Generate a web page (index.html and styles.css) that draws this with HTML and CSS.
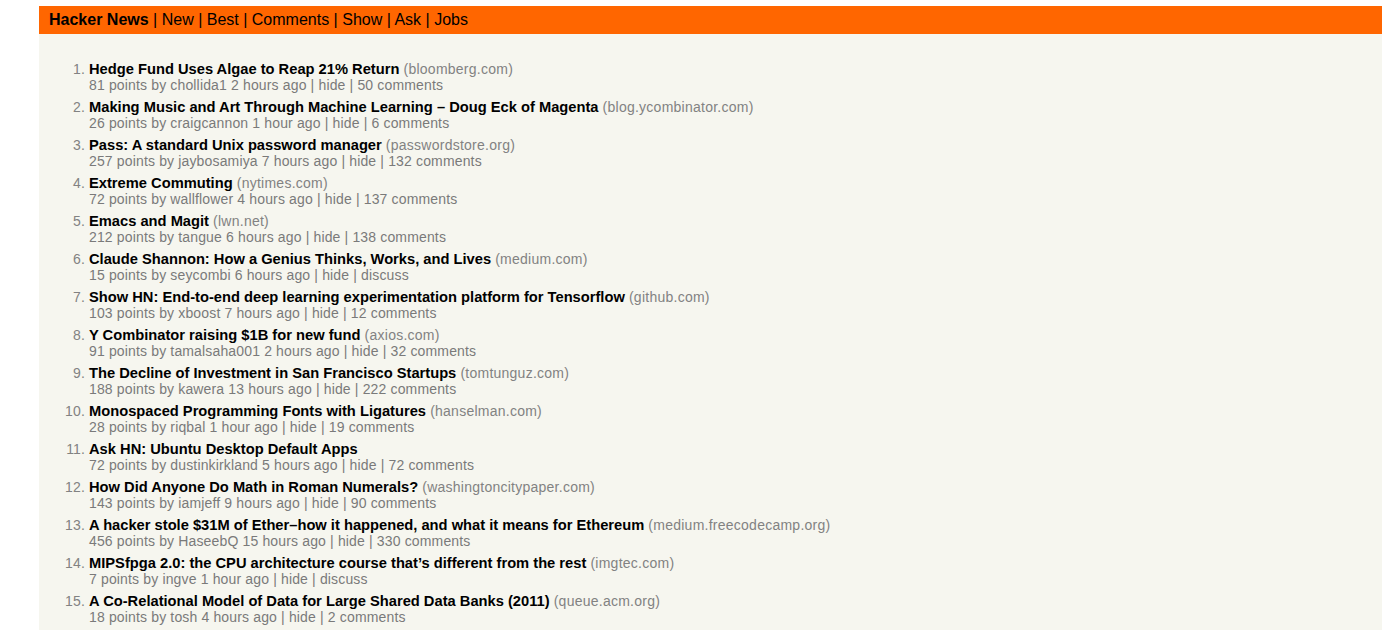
FILE: index.html
```html
<!DOCTYPE html>
<html>
<head>
<meta charset="utf-8">
<title>Hacker News</title>
<link rel="stylesheet" href="styles.css">
</head>
<body>
<div class="page">
  <header class="topbar">
    <b class="brand">Hacker News</b><span class="sep"> | </span><a>New</a><span class="sep"> | </span><a>Best</a><span class="sep"> | </span><a>Comments</a><span class="sep"> | </span><a>Show</a><span class="sep"> | </span><a>Ask</a><span class="sep"> | </span><a>Jobs</a>
  </header>
  <ol class="stories">
    <li class="story"><span class="rank">1.</span><div class="body"><div class="title"><a>Hedge Fund Uses Algae to Reap 21% Return</a> <span class="site">(bloomberg.com)</span></div><div class="sub">81 points by chollida1 2 hours ago | hide | 50 comments</div></div></li>
    <li class="story"><span class="rank">2.</span><div class="body"><div class="title"><a>Making Music and Art Through Machine Learning – Doug Eck of Magenta</a> <span class="site">(blog.ycombinator.com)</span></div><div class="sub">26 points by craigcannon 1 hour ago | hide | 6 comments</div></div></li>
    <li class="story"><span class="rank">3.</span><div class="body"><div class="title"><a>Pass: A standard Unix password manager</a> <span class="site">(passwordstore.org)</span></div><div class="sub">257 points by jaybosamiya 7 hours ago | hide | 132 comments</div></div></li>
    <li class="story"><span class="rank">4.</span><div class="body"><div class="title"><a>Extreme Commuting</a> <span class="site">(nytimes.com)</span></div><div class="sub">72 points by wallflower 4 hours ago | hide | 137 comments</div></div></li>
    <li class="story"><span class="rank">5.</span><div class="body"><div class="title"><a>Emacs and Magit</a> <span class="site">(lwn.net)</span></div><div class="sub">212 points by tangue 6 hours ago | hide | 138 comments</div></div></li>
    <li class="story"><span class="rank">6.</span><div class="body"><div class="title"><a>Claude Shannon: How a Genius Thinks, Works, and Lives</a> <span class="site">(medium.com)</span></div><div class="sub">15 points by seycombi 6 hours ago | hide | discuss</div></div></li>
    <li class="story"><span class="rank">7.</span><div class="body"><div class="title"><a>Show HN: End-to-end deep learning experimentation platform for Tensorflow</a> <span class="site">(github.com)</span></div><div class="sub">103 points by xboost 7 hours ago | hide | 12 comments</div></div></li>
    <li class="story"><span class="rank">8.</span><div class="body"><div class="title"><a>Y Combinator raising $1B for new fund</a> <span class="site">(axios.com)</span></div><div class="sub">91 points by tamalsaha001 2 hours ago | hide | 32 comments</div></div></li>
    <li class="story"><span class="rank">9.</span><div class="body"><div class="title"><a>The Decline of Investment in San Francisco Startups</a> <span class="site">(tomtunguz.com)</span></div><div class="sub">188 points by kawera 13 hours ago | hide | 222 comments</div></div></li>
    <li class="story"><span class="rank">10.</span><div class="body"><div class="title"><a>Monospaced Programming Fonts with Ligatures</a> <span class="site">(hanselman.com)</span></div><div class="sub">28 points by riqbal 1 hour ago | hide | 19 comments</div></div></li>
    <li class="story"><span class="rank">11.</span><div class="body"><div class="title"><a>Ask HN: Ubuntu Desktop Default Apps</a></div><div class="sub">72 points by dustinkirkland 5 hours ago | hide | 72 comments</div></div></li>
    <li class="story"><span class="rank">12.</span><div class="body"><div class="title"><a>How Did Anyone Do Math in Roman Numerals?</a> <span class="site">(washingtoncitypaper.com)</span></div><div class="sub">143 points by iamjeff 9 hours ago | hide | 90 comments</div></div></li>
    <li class="story"><span class="rank">13.</span><div class="body"><div class="title"><a>A hacker stole $31M of Ether–how it happened, and what it means for Ethereum</a> <span class="site">(medium.freecodecamp.org)</span></div><div class="sub">456 points by HaseebQ 15 hours ago | hide | 330 comments</div></div></li>
    <li class="story"><span class="rank">14.</span><div class="body"><div class="title"><a>MIPSfpga 2.0: the CPU architecture course that’s different from the rest</a> <span class="site">(imgtec.com)</span></div><div class="sub">7 points by ingve 1 hour ago | hide | discuss</div></div></li>
    <li class="story"><span class="rank">15.</span><div class="body"><div class="title"><a>A Co-Relational Model of Data for Large Shared Data Banks (2011)</a> <span class="site">(queue.acm.org)</span></div><div class="sub">18 points by tosh 4 hours ago | hide | 2 comments</div></div></li>
  </ol>
</div>
</body>
</html>
```
FILE: styles.css
```css
html, body {
  margin: 0;
  padding: 0;
  background: #ffffff;
}
body {
  font-family: "Liberation Sans", Arial, sans-serif;
  overflow: hidden;
}
.page {
  margin: 6px 0 0 39px;
  background: #f6f6ef;
  min-height: 700px;
}
.topbar {
  background: #ff6600;
  height: 28px;
  line-height: 28px;
  padding-left: 10px;
  font-size: 16px;
  color: #000;
}
.topbar a { color: #000; }
.brand { font-weight: bold; }
.stories {
  list-style: none;
  margin: 0;
  padding: 27px 0 0 0;
}
.story {
  display: flex;
  margin-bottom: 6px;
}
.rank {
  width: 46px;
  text-align: right;
  color: #828282;
  font-size: 14px;
  line-height: 16px;
  padding-right: 4px;
  letter-spacing: 0.15px;
}
.title {
  font-size: 14.7px;
  line-height: 16px;
  font-weight: bold;
  color: #000;
}
.site {
  font-weight: normal;
  font-size: 14px;
  color: #828282;
  letter-spacing: 0.25px;
}
.sub {
  font-size: 14px;
  line-height: 16px;
  color: #7a7a7a;
  letter-spacing: 0.15px;
}
```
